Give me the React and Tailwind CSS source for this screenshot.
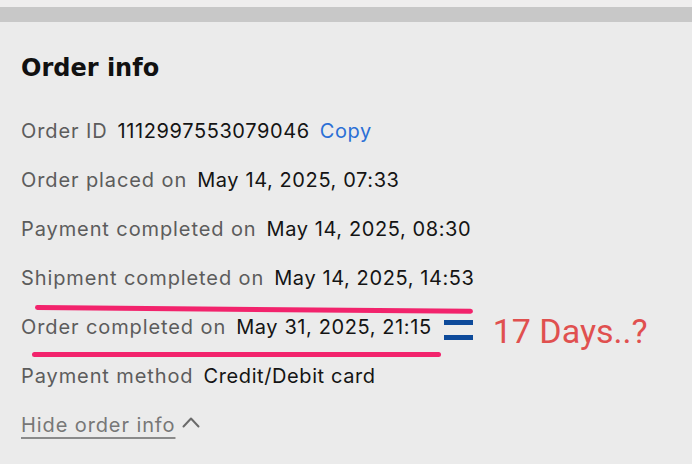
const rows = [
  ["Order placed on", "May 14, 2025, 07:33"],
  ["Payment completed on", "May 14, 2025, 08:30"],
  ["Shipment completed on", "May 14, 2025, 14:53"],
];

function Label({ children }) {
  return <span className="text-[#5c5c5c] tracking-[0.9px]">{children}</span>;
}

function Value({ children }) {
  return <span className="text-[#141414] tracking-[0.6px]">{children}</span>;
}

function Row({ label, value }) {
  return (
    <div className="flex items-center gap-[10px] h-[49px]">
      <Label>{label}</Label>
      <Value>{value}</Value>
    </div>
  );
}

export default function App() {
  return (
    <div
      className="relative w-[692px] h-[464px] bg-[#ebebeb] overflow-hidden text-[20px] leading-[24px]"
      style={{ fontFamily: "Inter, 'Noto Sans', sans-serif" }}
    >
      <div className="h-[7px] bg-[#efeeee]" />
      <div className="h-[15px] bg-[#c8c8c8]" />
      <div className="px-[21px] pt-[30px]">
        <h2
          className="text-[24px] font-bold text-[#111] leading-[32px] mb-[22px]"
          style={{ fontFamily: "'DejaVu Sans', sans-serif" }}
        >
          Order info
        </h2>

        <div className="flex items-center gap-[10px] h-[49px]">
          <Label>Order ID</Label>
          <Value>1112997553079046</Value>
          <span className="text-[#2a6fd6] tracking-[0.6px]">Copy</span>
        </div>
        {rows.map(([l, v]) => (
          <Row key={l} label={l} value={v} />
        ))}

        <div className="flex items-center h-[49px]">
          <div className="flex items-center gap-[10px]">
            <Label>Order completed on</Label>
            <Value>May 31, 2025, 21:15</Value>
          </div>
          <div className="ml-[12px] mt-[6px] flex flex-col gap-[10px]">
            <div className="w-[29px] h-[5px] bg-[#0d4a9a]" />
            <div className="w-[29px] h-[5px] bg-[#0d4a9a]" />
          </div>
          <span
            className="ml-[20px] mt-[8px] text-[34px] leading-[40px] text-[#e0504f]"
            style={{ fontFamily: "Roboto, sans-serif" }}
          >
            17 Days..?
          </span>
        </div>

        <Row label="Payment method" value="Credit/Debit card" />

        <div className="flex items-center gap-[7px] h-[49px]">
          <span className="text-[#777] tracking-[0.9px] underline underline-offset-[5px] decoration-[2px] decoration-[#8a8a8a]">
            Hide order info
          </span>
          <svg width="18" height="12" viewBox="0 0 18 12" className="-mt-[6px]">
            <polyline points="1.5,10.5 9,2.5 16.5,10.5" fill="none" stroke="#6a6a6a" strokeWidth="2" strokeLinecap="round" strokeLinejoin="round" />
          </svg>
        </div>
      </div>

      <div className="absolute left-[35px] top-[305px] w-[438px] h-[5px] rounded-full bg-[#f2236c] rotate-[0.5deg] origin-left" />
      <div className="absolute left-[32px] top-[352px] w-[409px] h-[5px] rounded-full bg-[#f2236c]" />
    </div>
  );
}
